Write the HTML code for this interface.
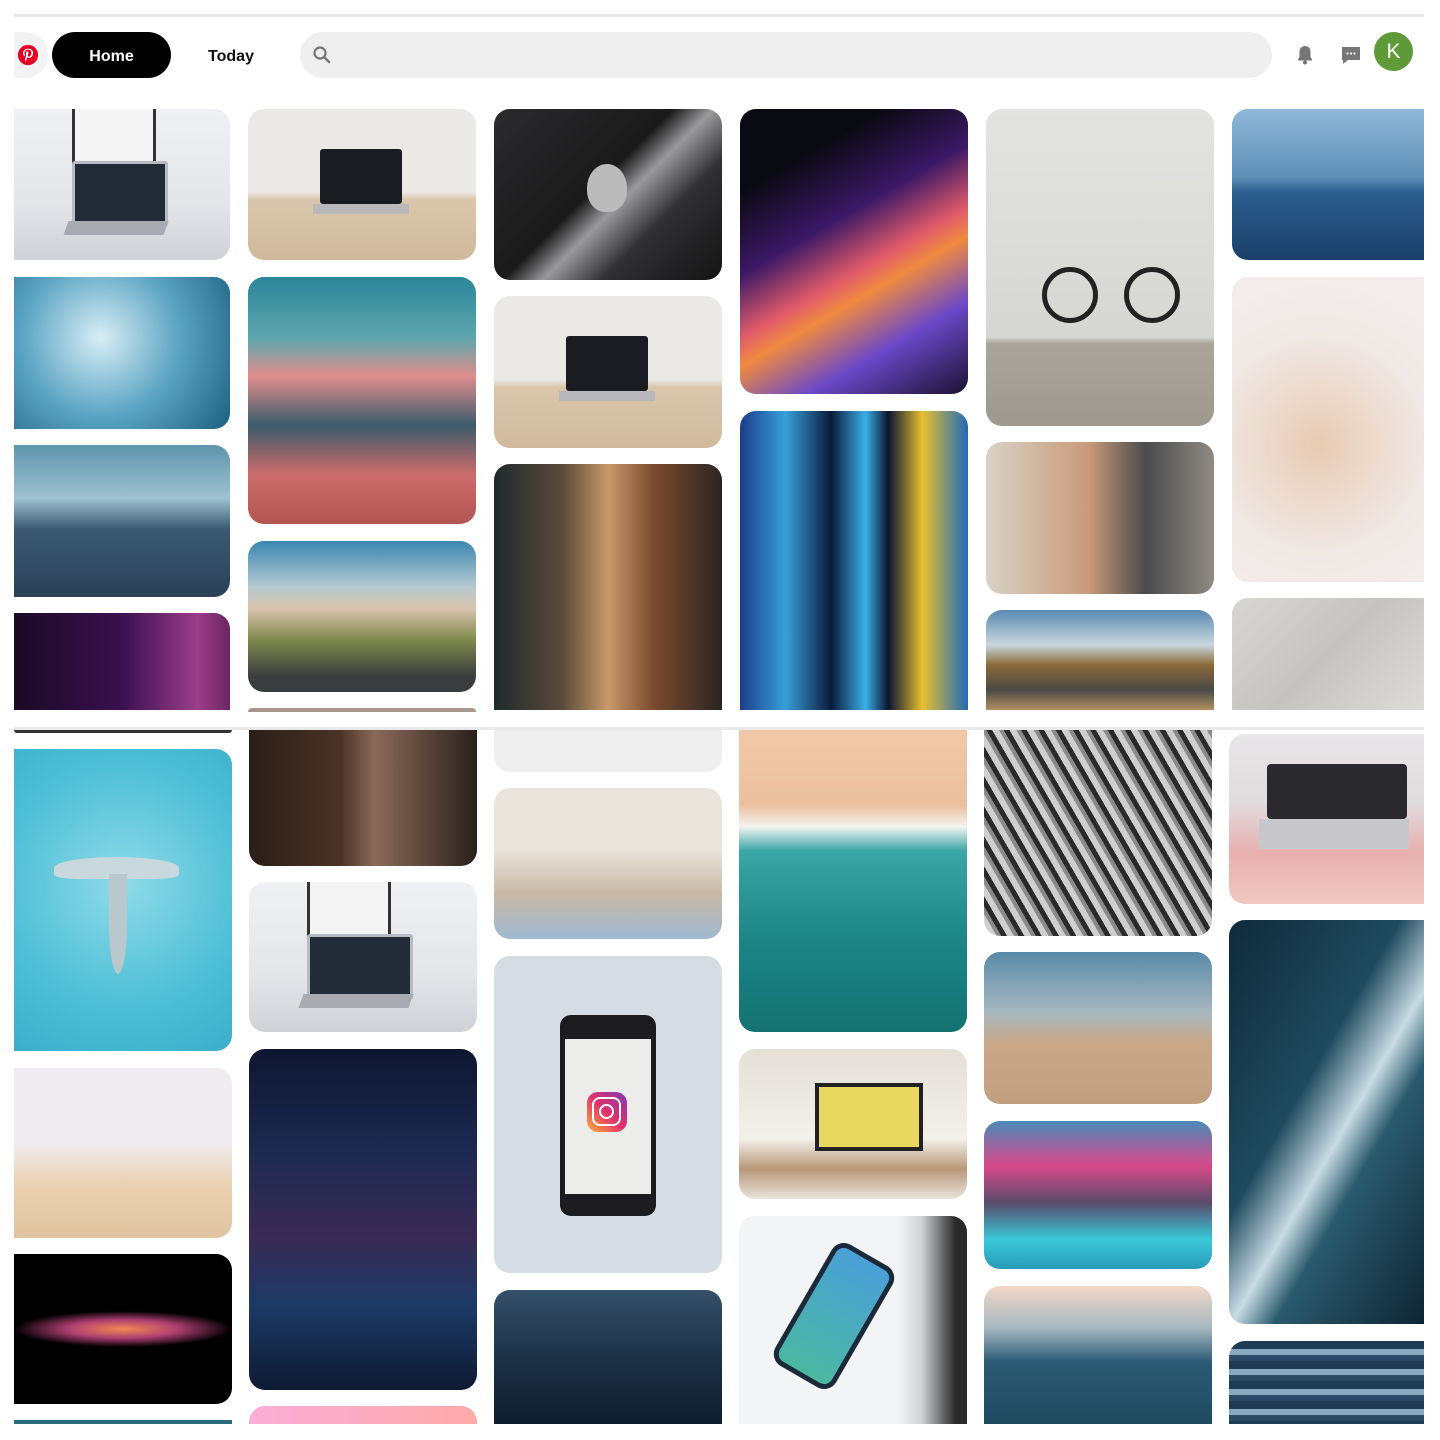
<!DOCTYPE html>
<html><head><meta charset="utf-8"><style>
body{margin:0;width:1440px;height:1440px;background:#fff;position:relative;overflow:hidden;font-family:"Liberation Sans",sans-serif}
.t{position:absolute;border-radius:16px;overflow:hidden}
.l{position:absolute;background:#e9e9e9}
</style></head><body>
<div class="l" style="left:14px;top:14px;width:1410px;height:3px"></div>
<div style="position:absolute;left:14px;top:32px;width:34px;height:46px;background:#f3f3f3;border-radius:0 23px 23px 0"></div>
<svg style="position:absolute;left:17px;top:44px" width="22" height="22" viewBox="0 0 24 24"><circle cx="12" cy="12" r="11" fill="#e60023"/><path d="M12.5 5c-4 0-6 2.7-6 5 0 1.4.6 2.6 1.7 3 .2.1.4 0 .4-.2l.2-.7c.1-.2 0-.3-.1-.5-.3-.4-.6-.9-.6-1.6 0-2.1 1.6-3.9 4.1-3.9 2.2 0 3.5 1.4 3.5 3.2 0 2.4-1.1 4.4-2.6 4.4-.9 0-1.500-.7-1.3-1.6.2-1.1.7-2.2.7-2.9 0-.7-.4-1.2-1.100-1.2-.9 0-1.600.9-1.600 2.1 0 .8.3 1.300.3 1.300l-1.1 4.6c-.3 1.3 0 3 0 3.100h.2c.1-.1 1.100-1.400 1.400-2.700l.6-2.200c.3.5 1.100 1 2 1 2.600 0 4.400-2.400 4.400-5.600C17.600 7.300 15.600 5 12.500 5z" fill="#fff"/></svg>
<div style="position:absolute;left:52px;top:32px;width:119px;height:46px;background:#000;border-radius:23px;color:#fff;font-weight:bold;font-size:16px;line-height:50px;text-align:center">Home</div>
<div style="position:absolute;left:196px;top:32px;width:70px;height:46px;color:#111;font-weight:bold;font-size:16px;line-height:50px;text-align:center">Today</div>
<div style="position:absolute;left:300px;top:32px;width:972px;height:46px;background:#efefef;border-radius:23px"></div>
<svg style="position:absolute;left:312px;top:45px" width="20" height="20" viewBox="0 0 20 20"><circle cx="8" cy="8" r="5.5" fill="none" stroke="#767676" stroke-width="2.2"/><path d="M12 12l5 5" stroke="#767676" stroke-width="2.5" stroke-linecap="round"/></svg>
<svg style="position:absolute;left:1295px;top:44px" width="20" height="22" viewBox="0 0 20 22"><path d="M10 2c-3.5 0-5.5 2.5-5.5 6v5L3 15.5v1h14v-1L15.5 13V8C15.5 4.5 13.5 2 10 2z" fill="#767676"/><circle cx="10" cy="18.5" r="2" fill="#767676"/></svg>
<svg style="position:absolute;left:1340px;top:44px" width="22" height="22" viewBox="0 0 22 22"><path d="M2 3h18v13H8l-5 4v-4H2z" fill="#767676"/><circle cx="7.5" cy="9.5" r="1.1" fill="#fff"/><circle cx="11" cy="9.5" r="1.1" fill="#fff"/><circle cx="14.5" cy="9.5" r="1.1" fill="#fff"/></svg>
<div style="position:absolute;left:1374px;top:32px;width:39px;height:39px;border-radius:50%;background:#5e9b38;color:#fff;font-size:21px;line-height:39px;text-align:center">K</div>

<!-- top section -->
<div class="t" style="left:14px;top:109px;width:216px;height:151px;border-radius:0 16px 16px 0;background:linear-gradient(#eef0f3,#e4e6ea 60%,#cfd2d6)"><div style="position:absolute;left:58px;top:0;width:78px;height:60px;background:#f4f4f5;border:3px solid #333;border-top:0"></div><div style="position:absolute;left:58px;top:52px;width:90px;height:60px;background:#232a38;border:3px solid #b8bcc2;border-radius:3px"></div><div style="position:absolute;left:52px;top:112px;width:100px;height:14px;background:#a8acb2;transform:skewX(-20deg)"></div></div>
<div class="t" style="left:14px;top:277px;width:216px;height:152px;border-radius:0 16px 16px 0;background:radial-gradient(circle at 40% 40%,#d8eef5,#5aa3c2 50%,#1c5f80)"></div>
<div class="t" style="left:14px;top:445px;width:216px;height:152px;border-radius:0 16px 16px 0;background:linear-gradient(#5e95ad,#9ec2d0 35%,#3b5a73 55%,#2b4058)"></div>
<div class="t" style="left:14px;top:613px;width:216px;height:97px;border-radius:0 16px 0 0;background:linear-gradient(90deg,#1a0a25,#3a1050 50%,#9b3d8a 85%,#6a2660)"></div>

<div class="t" style="left:248px;top:109px;width:228px;height:151px;background:linear-gradient(#ebe9e6 55%,#d9c7ad 60%,#cfb99c)"><div style="position:absolute;left:72px;top:40px;width:82px;height:55px;background:#1b1c22;border-radius:3px"></div><div style="position:absolute;left:65px;top:95px;width:96px;height:10px;background:#b9b9bc"></div></div>
<div class="t" style="left:248px;top:277px;width:228px;height:247px;background:linear-gradient(#2b8599,#5fa7ad 25%,#e08e8e 40%,#3c5b6a 60%,#cc6b6b 80%,#b35652)"></div>
<div class="t" style="left:248px;top:541px;width:228px;height:151px;background:linear-gradient(#3a86b0,#b4cad0 30%,#d8c3ad 45%,#7f8a4e 65%,#3a3d3e 90%)"></div>
<div class="t" style="left:248px;top:708px;width:228px;height:4px;border-radius:8px 8px 0 0;background:#a89890"></div>

<div class="t" style="left:494px;top:109px;width:228px;height:171px;background:linear-gradient(135deg,#2b2b2d,#1a1a1b 45%,#9a9a9c 55%,#303032 70%,#141415)"><div style="position:absolute;left:93px;top:55px;width:40px;height:48px;background:#bbbbbc;border-radius:50% 50% 45% 45%"></div></div>
<div class="t" style="left:494px;top:296px;width:228px;height:152px;background:linear-gradient(#ebe9e6 55%,#d9c7ad 60%,#cfb99c)"><div style="position:absolute;left:72px;top:40px;width:82px;height:55px;background:#1b1c22;border-radius:3px"></div><div style="position:absolute;left:65px;top:95px;width:96px;height:10px;background:#b9b9bc"></div></div>
<div class="t" style="left:494px;top:464px;width:228px;height:246px;border-radius:16px 16px 0 0;background:linear-gradient(90deg,#1f2a2c,#5a4a3a 30%,#c99a6b 50%,#7a4a2e 70%,#2a2522)"></div>

<div class="t" style="left:740px;top:109px;width:228px;height:285px;background:linear-gradient(150deg,#0a0a12 20%,#3b1866 40%,#e05a6a 55%,#f08a40 62%,#6a48c8 78%,#1a1230)"></div>
<div class="t" style="left:740px;top:411px;width:228px;height:299px;border-radius:16px 16px 0 0;background:linear-gradient(90deg,#1c3d8a,#36a0d8 20%,#0b1a3a 40%,#3ab0e8 55%,#0a1430 65%,#e8c030 80%,#1f6ab8)"></div>

<div class="t" style="left:986px;top:109px;width:228px;height:317px;background:linear-gradient(#e3e3e1,#d6d6d3 72%,#a9a59b 74%,#9d998f)"><div style="position:absolute;left:56px;top:158px;width:46px;height:46px;border:5px solid #222;border-radius:50%"></div><div style="position:absolute;left:138px;top:158px;width:46px;height:46px;border:5px solid #222;border-radius:50%"></div></div>
<div class="t" style="left:986px;top:442px;width:228px;height:152px;background:linear-gradient(90deg,#d8d2c6,#c99a7a 45%,#4a4b4d 70%,#8f8a83)"></div>
<div class="t" style="left:986px;top:610px;width:228px;height:100px;border-radius:16px 16px 0 0;background:linear-gradient(#5a8ab0,#c8d6dc 35%,#8a6a3a 55%,#4a4a46 80%,#b09060)"></div>

<div class="t" style="left:1232px;top:109px;width:192px;height:151px;border-radius:16px 0 0 16px;background:linear-gradient(#8fb8d8,#5e90b8 45%,#2c5f8e 55%,#1a3f6a)"></div>
<div class="t" style="left:1232px;top:277px;width:192px;height:305px;border-radius:16px 0 0 16px;background:radial-gradient(circle at 45% 55%,#e8cbb3,#f0e8e5 55%,#f3eeee)"></div>
<div class="t" style="left:1232px;top:598px;width:192px;height:112px;border-radius:16px 0 0 0;background:linear-gradient(135deg,#d7d6d3,#c5c4c0 50%,#dcdbd8)"></div>

<div class="l" style="left:14px;top:727px;width:1410px;height:3px"></div>

<!-- bottom section -->
<div class="t" style="left:14px;top:730px;width:218px;height:3px;border-radius:0 0 8px 8px;background:#333"></div>
<div class="t" style="left:14px;top:749px;width:218px;height:302px;border-radius:0 16px 16px 0;background:radial-gradient(circle at 50% 45%,#8fdbe8,#4ebfd6 60%,#3aaecb)"><div style="position:absolute;left:40px;top:108px;width:125px;height:22px;background:#c8d8dc;border-radius:50% 50% 20% 20%"></div><div style="position:absolute;left:95px;top:125px;width:18px;height:100px;background:#b8c8cc;border-radius:0 0 50% 50%"></div></div>
<div class="t" style="left:14px;top:1068px;width:218px;height:170px;border-radius:0 16px 16px 0;background:linear-gradient(#f0ebee 45%,#e8d0b0 70%,#e0c4a0)"></div>
<div class="t" style="left:14px;top:1254px;width:218px;height:150px;border-radius:0 16px 16px 0;background:radial-gradient(ellipse 50% 12% at 50% 50%,#f08a50,#b04070 50%,#000 100%)"></div>
<div class="t" style="left:14px;top:1420px;width:218px;height:4px;border-radius:0;background:#2a6a7a"></div>

<div class="t" style="left:249px;top:730px;width:228px;height:136px;border-radius:0 0 16px 16px;background:linear-gradient(90deg,#2a1e18,#4a3326 40%,#8a6a5a 55%,#2a201b)"></div>
<div class="t" style="left:249px;top:882px;width:228px;height:150px;background:linear-gradient(#eef0f3,#e4e6ea 60%,#cfd2d6)"><div style="position:absolute;left:58px;top:0;width:78px;height:60px;background:#f4f4f5;border:3px solid #333;border-top:0"></div><div style="position:absolute;left:58px;top:52px;width:100px;height:60px;background:#232a38;border:3px solid #b8bcc2;border-radius:3px"></div><div style="position:absolute;left:52px;top:112px;width:110px;height:14px;background:#a8acb2;transform:skewX(-20deg)"></div></div>
<div class="t" style="left:249px;top:1049px;width:228px;height:341px;background:linear-gradient(#0e1630,#1c2a50 30%,#3a2a55 55%,#1d3a66 75%,#0e1a33)"></div>
<div class="t" style="left:249px;top:1406px;width:228px;height:18px;border-radius:16px 16px 0 0;background:linear-gradient(90deg,#fcaed8,#fdaaa8)"></div>

<div class="t" style="left:494px;top:730px;width:228px;height:42px;border-radius:0 0 16px 16px;background:#eeeeef"></div>
<div class="t" style="left:494px;top:788px;width:228px;height:151px;background:linear-gradient(#eae4dc 40%,#c8b9a6 70%,#a0b8d0)"></div>
<div class="t" style="left:494px;top:956px;width:228px;height:317px;background:#d6dce4"><div style="position:absolute;left:66px;top:59px;width:96px;height:201px;background:#1c1c1e;border-radius:11px"></div><div style="position:absolute;left:71px;top:83px;width:86px;height:155px;background:#ececea"></div><div style="position:absolute;left:93px;top:136px;width:40px;height:40px;border-radius:11px;background:linear-gradient(45deg,#fbb03b,#e1306c 50%,#833ab4)"><div style="position:absolute;left:5px;top:5px;width:25px;height:25px;border:2.5px solid #fff;border-radius:8px"></div><div style="position:absolute;left:12px;top:12px;width:11px;height:11px;border:2.5px solid #fff;border-radius:50%"></div></div></div>
<div class="t" style="left:494px;top:1290px;width:228px;height:134px;border-radius:16px 16px 0 0;background:linear-gradient(#35506a,#1d3247 50%,#0f1d2c)"></div>

<div class="t" style="left:739px;top:730px;width:228px;height:302px;border-radius:0 0 16px 16px;background:linear-gradient(#f0c8a8,#eac0a0 25%,#f4f4f0 32%,#3aa6a6 40%,#1c8585 70%,#157272)"></div>
<div class="t" style="left:739px;top:1049px;width:228px;height:150px;background:linear-gradient(#e4e0d8,#f2f0ea 60%,#b89878 80%,#e8e4de)"><div style="position:absolute;left:76px;top:34px;width:100px;height:60px;background:#e8d860;border:4px solid #222"></div></div>
<div class="t" style="left:739px;top:1216px;width:228px;height:208px;border-radius:16px 16px 0 0;background:linear-gradient(90deg,#f3f4f5 70%,#d0d2d4 80%,#2a2a2a 95%)"><div style="position:absolute;left:60px;top:30px;width:60px;height:130px;background:linear-gradient(#4aa0d8,#4ab8a0);border:5px solid #1a2a3a;border-radius:14px;transform:rotate(30deg)"></div></div>

<div class="t" style="left:984px;top:730px;width:228px;height:206px;border-radius:0 0 16px 16px;background:repeating-linear-gradient(60deg,#2a2a2a 0 5px,#cfcfcf 5px 11px,#8a8a8a 11px 15px)"></div>
<div class="t" style="left:984px;top:952px;width:228px;height:152px;background:linear-gradient(#5a8aa8,#a8b8c0 40%,#c8a888 60%,#c0a080)"></div>
<div class="t" style="left:984px;top:1121px;width:228px;height:148px;background:linear-gradient(#4a8ab8,#d84a8a 30%,#5a4a6a 55%,#3ac8d8 80%,#2a9ab8)"></div>
<div class="t" style="left:984px;top:1286px;width:228px;height:138px;border-radius:16px 16px 0 0;background:linear-gradient(#f0d8c8,#a8b8c0 30%,#2c5a74 55%,#1f4a60)"></div>

<div class="t" style="left:1229px;top:734px;width:195px;height:170px;border-radius:16px 0 0 16px;background:linear-gradient(#e8e6e8,#e0dcde 40%,#e8b0b0 70%,#f0c8c0)"><div style="position:absolute;left:38px;top:30px;width:140px;height:55px;background:#2a2a2e;border-radius:4px"></div><div style="position:absolute;left:30px;top:85px;width:150px;height:30px;background:#c8c8cc"></div></div>
<div class="t" style="left:1229px;top:920px;width:195px;height:404px;border-radius:16px 0 0 16px;background:linear-gradient(120deg,#0f2a3a,#1f4a5e 40%,#c8dce4 55%,#2a5a6e 65%,#0e2533)"></div>
<div class="t" style="left:1229px;top:1341px;width:195px;height:83px;border-radius:16px 0 0 0;background:repeating-linear-gradient(#1e3a55 0 8px,#8aa8c0 8px 14px,#2c4a66 14px 20px)"></div>
</body></html>
